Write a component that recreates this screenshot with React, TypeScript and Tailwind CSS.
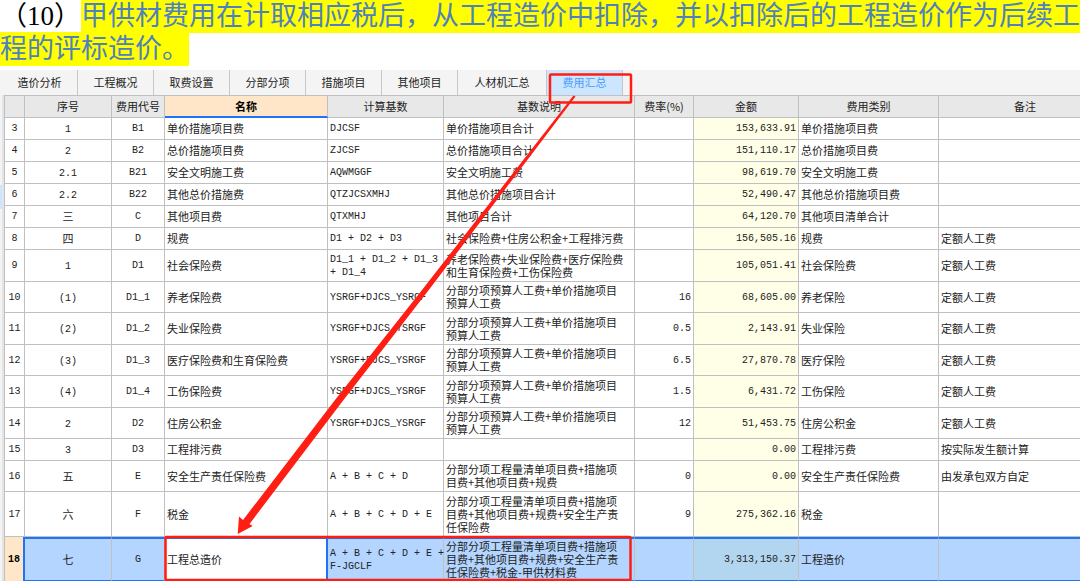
import React, { useState } from 'react';
import clsx from 'clsx';

interface Row {
  no: number;
  serial: string;
  code: string;
  name: string;
  base: string;
  desc: string;
  rate: string;
  amount: string;
  type: string;
  remark: string;
  height: string;
}

const ONE = 'h-[22px]';
const TWO = 'h-[31px]';
const TWO_TALL = 'h-[32px]';
const THREE = 'h-[45px]';

const LABOR = '分部分项预算人工费+单价措施项目\n预算人工费';

const rows: Row[] = [
  { no: 3, serial: '1', code: 'B1', name: '单价措施项目费', base: 'DJCSF', desc: '单价措施项目合计', rate: '', amount: '153,633.91', type: '单价措施项目费', remark: '', height: ONE },
  { no: 4, serial: '2', code: 'B2', name: '总价措施项目费', base: 'ZJCSF', desc: '总价措施项目合计', rate: '', amount: '151,110.17', type: '总价措施项目费', remark: '', height: ONE },
  { no: 5, serial: '2.1', code: 'B21', name: '安全文明施工费', base: 'AQWMGGF', desc: '安全文明施工费', rate: '', amount: '98,619.70', type: '安全文明施工费', remark: '', height: ONE },
  { no: 6, serial: '2.2', code: 'B22', name: '其他总价措施费', base: 'QTZJCSXMHJ', desc: '其他总价措施项目合计', rate: '', amount: '52,490.47', type: '其他总价措施项目费', remark: '', height: ONE },
  { no: 7, serial: '三', code: 'C', name: '其他项目费', base: 'QTXMHJ', desc: '其他项目合计', rate: '', amount: '64,120.70', type: '其他项目清单合计', remark: '', height: ONE },
  { no: 8, serial: '四', code: 'D', name: '规费', base: 'D1 + D2 + D3', desc: '社会保险费+住房公积金+工程排污费', rate: '', amount: '156,505.16', type: '规费', remark: '定额人工费', height: ONE },
  { no: 9, serial: '1', code: 'D1', name: '社会保险费', base: 'D1_1 + D1_2 + D1_3\n+ D1_4', desc: '养老保险费+失业保险费+医疗保险费\n和生育保险费+工伤保险费', rate: '', amount: '105,051.41', type: '社会保险费', remark: '定额人工费', height: TWO_TALL },
  { no: 10, serial: '(1)', code: 'D1_1', name: '养老保险费', base: 'YSRGF+DJCS_YSRGF', desc: LABOR, rate: '16', amount: '68,605.00', type: '养老保险', remark: '定额人工费', height: TWO },
  { no: 11, serial: '(2)', code: 'D1_2', name: '失业保险费', base: 'YSRGF+DJCS_YSRGF', desc: LABOR, rate: '0.5', amount: '2,143.91', type: '失业保险', remark: '定额人工费', height: TWO_TALL },
  { no: 12, serial: '(3)', code: 'D1_3', name: '医疗保险费和生育保险费', base: 'YSRGF+DJCS_YSRGF', desc: LABOR, rate: '6.5', amount: '27,870.78', type: '医疗保险', remark: '定额人工费', height: TWO },
  { no: 13, serial: '(4)', code: 'D1_4', name: '工伤保险费', base: 'YSRGF+DJCS_YSRGF', desc: LABOR, rate: '1.5', amount: '6,431.72', type: '工伤保险', remark: '定额人工费', height: TWO_TALL },
  { no: 14, serial: '2', code: 'D2', name: '住房公积金', base: 'YSRGF+DJCS_YSRGF', desc: LABOR, rate: '12', amount: '51,453.75', type: '住房公积金', remark: '定额人工费', height: TWO },
  { no: 15, serial: '3', code: 'D3', name: '工程排污费', base: '', desc: '', rate: '', amount: '0.00', type: '工程排污费', remark: '按实际发生额计算', height: ONE },
  { no: 16, serial: '五', code: 'E', name: '安全生产责任保险费', base: 'A + B + C + D', desc: '分部分项工程量清单项目费+措施项\n目费+其他项目费+规费', rate: '0', amount: '0.00', type: '安全生产责任保险费', remark: '由发承包双方自定', height: TWO },
  { no: 17, serial: '六', code: 'F', name: '税金', base: 'A + B + C + D + E', desc: '分部分项工程量清单项目费+措施项\n目费+其他项目费+规费+安全生产责\n任保险费', rate: '9', amount: '275,362.16', type: '税金', remark: '', height: THREE },
  { no: 18, serial: '七', code: 'G', name: '工程总造价', base: 'A + B + C + D + E +\nF-JGCLF', desc: '分部分项工程量清单项目费+措施项\n目费+其他项目费+规费+安全生产责\n任保险费+税金-甲供材料费', rate: '', amount: '3,313,150.37', type: '工程造价', remark: '', height: THREE },
];

const tabs = ['造价分析', '工程概况', '取费设置', '分部分项', '措施项目', '其他项目', '人材机汇总', '费用汇总'];

const columns = [
  { title: '', width: 'w-[20px]' },
  { title: '序号', width: 'w-[87px]' },
  { title: '费用代号', width: 'w-[53px]' },
  { title: '名称', width: 'w-[163px]' },
  { title: '计算基数', width: 'w-[116px]' },
  { title: '基数说明', width: 'w-[191px]' },
  { title: '费率(%)', width: 'w-[59px]' },
  { title: '金额', width: 'w-[105px]' },
  { title: '费用类别', width: 'w-[140px]' },
  { title: '备注', width: '' },
];

const MONO = "font-['Liberation_Mono','Noto_Sans_CJK_SC',monospace] text-[10px]";

const Cell: React.FC<{ selected: boolean; className?: string; children?: React.ReactNode }> = ({ selected, className, children }) => (
  <td
    className={clsx(
      'border-r p-0 whitespace-pre',
      selected ? 'border-y-2 border-y-[#1f73f5]' : 'border-b border-b-[#c0c0c0]',
      className?.includes('border-r-[') ? '' : 'border-r-[#c0c0c0]',
      className
    )}
  >
    {children}
  </td>
);

const App: React.FC = () => {
  const [activeTab, setActiveTab] = useState('费用汇总');
  const [selectedNo, setSelectedNo] = useState(18);

  return (
    <div className="bg-white text-[#222222]">
      <h1 className="pb-1 text-[27px] leading-[33px] font-normal text-black font-['Liberation_Serif','Noto_Sans_CJK_SC',serif]">
        <span>（10）</span>
        <span className="bg-[#ffff00] py-[2px] text-[#4f81bd]">甲供材费用在计取相应税后，从工程造价中扣除，并以扣除后的工程造价作为后续工</span>
        <span className="bg-[#ffff00] py-[2px] text-[#4f81bd]">程的评标造价。</span>
      </h1>

      <div className="relative text-[11px] leading-[13px] font-['Noto_Sans_CJK_SC',sans-serif]">
        {/* Tab bar */}
        <nav className="flex h-[25px] bg-[#f4f4f4] pl-[2px]">
          {tabs.map((tab) => (
            <button
              key={tab}
              type="button"
              onClick={() => setActiveTab(tab)}
              className={clsx(
                'shrink-0 border-r border-[#c8c8c8]',
                tab.length > 4 ? 'w-[89px]' : 'w-[76px]',
                tab === activeTab ? 'bg-[#cce6ff] text-[#4a9bff]' : 'text-[#222222]'
              )}
            >
              {tab}
            </button>
          ))}
        </nav>

        <div className="flex overflow-hidden">
          {/* Collapsed side panel */}
          <div className="w-1 shrink-0 border-r-2 border-[#e4e4e4] bg-[#f4f4f4] pt-[90px]">
            <div className="h-6 bg-[#cce6ff]" />
          </div>
          {/* The last column runs past the right edge of the window */}
          <table className="w-[calc(100%+28px)] shrink-0 table-fixed border-separate border-spacing-0 border-t border-l border-[#c0c0c0]">
            <colgroup>
              {columns.map((col, index) => (
                <col key={index} className={col.width} />
              ))}
            </colgroup>
            <thead>
              <tr>
                {columns.map((col, index) => (
                  <th
                    key={index}
                    scope="col"
                    className={clsx(
                      'h-[22px] border-r border-r-[#c0c0c0] p-0',
                      col.title === '名称'
                        ? 'border-b-2 border-b-[#1f73f5] bg-[#ffe6c8] font-bold text-black'
                        : 'border-b border-b-[#c0c0c0] bg-[#e8e8e8] font-normal'
                    )}
                  >
                    {col.title}
                  </th>
                ))}
              </tr>
            </thead>
            <tbody>
              {rows.map((row) => {
                const selected = row.no === selectedNo;
                return (
                  <tr key={row.no} className={selected ? 'bg-[#b3d5ff]' : 'bg-white'} onClick={() => setSelectedNo(row.no)}>
                    <th
                      scope="row"
                      className={clsx(
                        'border-b border-b-[#c0c0c0] p-0',
                        MONO,
                        row.height,
                        selected
                          ? 'border-r-2 border-r-[#1f73f5] bg-[#ffe6c8] font-bold text-black'
                          : 'border-r border-r-[#c0c0c0] bg-white font-normal'
                      )}
                    >
                      {row.no}
                    </th>
                    <Cell selected={selected} className="text-center">
                      <span className={/\d/.test(row.serial) ? MONO : undefined}>{row.serial}</span>
                    </Cell>
                    <Cell selected={selected} className={clsx('text-center', MONO)}>{row.code}</Cell>
                    <Cell selected={selected} className={clsx('pl-[2px]', selected && 'border-r-2 border-r-[#1f73f5] bg-white')}>
                      {row.name}
                    </Cell>
                    <Cell selected={selected} className={clsx('pl-[2px]', MONO)}>{row.base}</Cell>
                    <Cell selected={selected} className="pl-[2px]">{row.desc}</Cell>
                    <Cell selected={selected} className={clsx('pr-[2px] text-right', MONO)}>{row.rate}</Cell>
                    <Cell selected={selected} className={clsx('pr-[2px] text-right', MONO, selected ? 'bg-[#b3d6f0]' : 'bg-[#ffffe8]')}>
                      {row.amount}
                    </Cell>
                    <Cell selected={selected} className="pl-[2px]">{row.type}</Cell>
                    <Cell selected={selected} className="pl-[2px]">{row.remark}</Cell>
                  </tr>
                );
              })}
            </tbody>
          </table>
        </div>

        {/* Red marks from the tab down to the total row */}
        <svg className="pointer-events-none absolute top-0 left-0" width="1080" height="511" viewBox="0 0 1080 511" aria-hidden="true">
          <rect x="550" y="4.5" width="81" height="28" rx="1" fill="none" stroke="#ff1e14" strokeWidth="2.5" />
          <rect x="165.5" y="467" width="465" height="43" rx="1" fill="none" stroke="#ff1e14" strokeWidth="2.5" />
          <path d="M573.5 25.5 L575.5 26.5 L428 221 L343.5 330 L249.5 454 L252.7 456 L237.7 464 L239 446.5 L243 450 L335 330 L422 220 Z" fill="#ff1e14" />
        </svg>
      </div>
    </div>
  );
};

export default App;
